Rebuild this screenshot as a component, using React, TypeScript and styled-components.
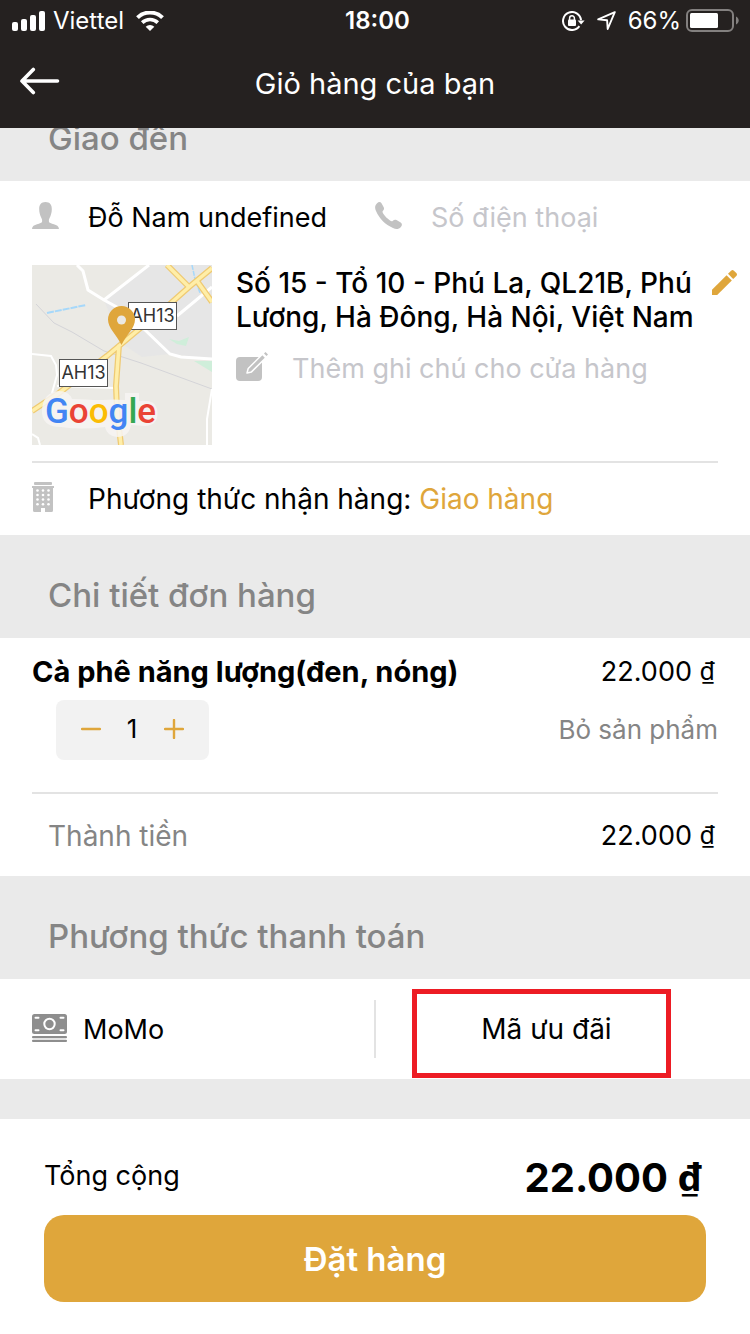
import React, { useState } from "react";
import styled, { createGlobalStyle } from "styled-components";

const color = {
  dark: "#252120",
  gold: "#dfa63b",
  band: "#eaeaea",
  rule: "#e3e3e3",
  muted: "#858585",
  icon: "#c2c2c2",
  placeholder: "#c6c6cb",
};

const GlobalStyle = createGlobalStyle`
  * { box-sizing: border-box; }
  body {
    margin: 0;
    background: #fff;
    color: #000;
    font-family: Inter, "Noto Sans", sans-serif;
    font-size: 27px;
    line-height: 34px;
  }
  button, input { font: inherit; color: inherit; }
  svg { display: block; flex: none; }
`;

const Page = styled.div`
  display: flex;
  flex-direction: column;
  min-height: 100vh;
`;

const Header = styled.header`
  background: ${color.dark};
  color: #fff;
`;

const StatusBar = styled.div`
  display: grid;
  grid-template-columns: 1fr auto 1fr;
  align-items: center;
  height: 40px;
  padding: 1px 11px 0 12px;
  font-size: 24px;
`;

const StatusGroup = styled.div<{ $end?: boolean; $gap: number }>`
  display: flex;
  align-items: center;
  justify-content: ${(p) => (p.$end ? "flex-end" : "flex-start")};
  gap: ${(p) => p.$gap}px;
`;

const Clock = styled.time`
  padding-left: 4px;
  font-weight: 600;
`;

const NavBar = styled.div`
  display: grid;
  grid-template-columns: 40px 1fr 40px;
  align-items: center;
  height: 88px;
  padding: 0 20px;
`;

const Title = styled.h1`
  margin: 0;
  font-size: 29px;
  font-weight: 400;
  text-align: center;
`;

const PlainButton = styled.button`
  display: flex;
  align-items: center;
  padding: 0;
  border: 0;
  background: none;
  cursor: pointer;
`;

const BackButton = styled(PlainButton)`
  height: 48px;
  margin-bottom: 6px;
`;

const Viewport = styled.main`
  flex: 1;
  overflow: hidden;
`;

const Scrolled = styled.div`
  margin-top: -50px;
`;

const SectionHeading = styled.h2`
  display: flex;
  align-items: flex-end;
  height: 103px;
  margin: 0;
  padding: 0 48px 23px;
  background: ${color.band};
  color: ${color.muted};
  font-size: 33px;
  font-weight: 500;
  line-height: 40px;
`;

const Section = styled.section`
  padding: 0 32px;
`;

const Contact = styled.div`
  display: grid;
  grid-template-columns: 1fr 1fr;
  height: 84px;
  padding-bottom: 12px;
`;

const Field = styled.label`
  display: grid;
  grid-template-columns: 56px 1fr;
  align-items: center;
  svg { margin-bottom: 3px; }
`;

const TextInput = styled.input`
  width: 100%;
  height: 34px;
  min-width: 0;
  padding: 2px 0 0;
  border: 0;
  outline: 0;
  background: none;
  &::placeholder { color: ${color.placeholder}; opacity: 1; }
`;

const Place = styled.div`
  display: grid;
  grid-template-columns: 180px 1fr;
  gap: 24px;
  padding-bottom: 16px;
  border-bottom: 2px solid ${color.rule};
`;

const PlaceDetails = styled.div`
  display: flex;
  flex-direction: column;
  gap: 17px;
  margin-right: -19px;
`;

const AddressRow = styled.div`
  display: flex;
  align-items: flex-start;
  justify-content: space-between;
`;

const Address = styled.p`
  flex: 1;
  margin: 0;
  padding-top: 1px;
  font-size: 28px;
  font-weight: 500;
`;

const EditButton = styled(PlainButton)`
  height: 34px;
`;

const DeliveryRow = styled.div`
  display: grid;
  grid-template-columns: 56px 1fr;
  align-items: center;
  height: 72px;
  font-size: 28px;
  svg { margin-bottom: 4px; }
`;

const LinkButton = styled.button<{ $tone: string; $size?: number }>`
  padding: 0;
  border: 0;
  background: none;
  color: ${(p) => p.$tone};
  font-size: ${(p) => p.$size ?? 28}px;
  cursor: pointer;
`;

const Item = styled.article`
  display: flex;
  flex-direction: column;
  gap: 11px;
  padding: 17px 0 32px;
  border-bottom: 2px solid ${color.rule};
`;

const SpreadRow = styled.div`
  display: flex;
  align-items: center;
  justify-content: space-between;
`;

const ItemName = styled.h3`
  margin: 0;
  font-size: 29px;
  font-weight: 700;
`;

const Stepper = styled.div`
  display: grid;
  grid-template-columns: 1fr 30px 1fr;
  align-items: center;
  justify-items: center;
  width: 153px;
  height: 60px;
  margin-left: 24px;
  padding: 0 9px 3px 8px;
  border-radius: 8px;
  background: #f2f2f2;
  font-size: 26px;
`;

const Subtotal = styled(SpreadRow)`
  height: 82px;
  padding: 1px 0 0 16px;
`;

const Muted = styled.span`
  color: ${color.muted};
  font-size: 28px;
`;

const Currency = styled.span`
  font-family: "Noto Sans", sans-serif;
  line-height: 1;
  vertical-align: 1px;
`;

const Amount = styled.span`
  padding-right: 3px;
  ${Currency} { font-size: 25px; }
`;

const TotalAmount = styled.strong`
  padding-right: 4px;
  font-size: 40px;
  font-weight: 700;
  ${Currency} { font-size: 38px; }
`;

const Payment = styled(Section)`
  display: grid;
  grid-template-columns: 1fr 1fr;
  align-items: center;
  height: 100px;
`;

const Method = styled(PlainButton)`
  gap: 16px;
  height: 58px;
  margin-right: -1px;
  border-right: 2px solid ${color.rule};
  svg { margin-bottom: 2px; }
`;

const MethodName = styled.span`
  padding-top: 2px;
`;

const Promo = styled.div`
  position: relative;
  display: flex;
  justify-content: center;
  align-items: center;
  height: 100px;
`;

const Highlight = styled.span`
  position: absolute;
  inset: 10px 47px 1px 37px;
  border: 5px solid #ed1c24;
  pointer-events: none;
`;

const Footer = styled.footer`
  padding: 32px 44px;
  border-top: 40px solid ${color.band};
`;

const Total = styled(SpreadRow)`
  height: 48px;
  margin-bottom: 16px;
  padding-top: 2px;
`;

const OrderButton = styled.button`
  width: 100%;
  height: 87px;
  border: 0;
  border-radius: 20px;
  background: ${color.gold};
  color: #fff;
  font-size: 33px;
  font-weight: 600;
  cursor: pointer;
`;

const Signal = () => (
  <svg width="33" height="20" viewBox="0 0 33 20" fill="#fff" aria-hidden="true">
    <rect x="0" y="11" width="6" height="9" rx="2" />
    <rect x="9" y="8" width="6" height="12" rx="2" />
    <rect x="18" y="4" width="6" height="16" rx="2" />
    <rect x="27" y="0" width="6" height="20" rx="2" />
  </svg>
);

const Wifi = () => (
  <svg width="28" height="20" viewBox="0 0 28 20" aria-hidden="true">
    <path d="M1.5 6.6a18 18 0 0 1 25 0" fill="none" stroke="#fff" strokeWidth="4" />
    <path d="M6.2 11.6a11.2 11.2 0 0 1 15.6 0" fill="none" stroke="#fff" strokeWidth="3.6" />
    <path d="M14 20l-4.3-4.3a6.2 6.2 0 0 1 8.6 0z" fill="#fff" />
  </svg>
);

const RotationLock = () => (
  <svg width="23" height="20" viewBox="0 0 23 20" aria-hidden="true">
    <path d="M17.4 15.2A9 9 0 1 1 19 9.2" fill="none" stroke="#fff" strokeWidth="2" />
    <path d="M15.6 9.4h7l-3.5 4z" fill="#fff" />
    <rect x="6" y="8.5" width="8" height="6.5" rx="1" fill="#fff" />
    <path d="M7.6 9V7.2a2.4 2.4 0 0 1 4.8 0V9" fill="none" stroke="#fff" strokeWidth="1.5" />
  </svg>
);

const LocationArrow = () => (
  <svg width="19" height="19" viewBox="0 0 19 19" aria-hidden="true">
    <path d="M17.8 1.2L1.200 8.400l8.900.8.600 8.800z" fill="none" stroke="#fff" strokeWidth="1.900" strokeLinejoin="round" />
  </svg>
);

const Battery = () => (
  <svg width="53" height="23" viewBox="0 0 53 23" aria-hidden="true">
    <rect x="1" y="1" width="46" height="21" rx="5" fill="none" stroke="#83807f" strokeWidth="2" />
    <rect x="4" y="4" width="28" height="15" rx="1.5" fill="#fff" />
    <path d="M50 7.500c3.600 1.600 3.600 6.400 0 8z" fill="#83807f" />
  </svg>
);

const ArrowLeft = () => (
  <svg width="40" height="28" viewBox="0 0 40 28" fill="none" stroke="#fff" strokeWidth="3.600" strokeLinecap="round" strokeLinejoin="round" aria-hidden="true">
    <path d="M13.300 2.500L2 14l11.300 11.500M2.500 14H37.500" />
  </svg>
);

const Person = () => (
  <svg width="27" height="27" viewBox="0 0 27 27" fill={color.icon} aria-hidden="true">
    <path d="M13.500 0c4.300 0 6.500 2.800 6.300 7.200 0 3-.8 5.400-1.500 7.200-.6 1.700-1.400 2.400-1.400 3.300v1.800c0 2.900 10.100 1.800 10.100 7.500H0c0-5.700 10.100-4.600 10.100-7.500v-1.800c0-.9-.8-1.600-1.400-3.300-.7-1.800-1.500-4.200-1.500-7.200C7 2.800 9.200 0 13.500 0z" />
  </svg>
);

const Phone = () => (
  <svg width="27" height="27" viewBox="0 0 27 27" fill={color.icon} aria-hidden="true">
    <path d="M2.100 1.200C3.600-.2 5.400-.3 6.500 1.200l2.200 4c.7 1.300.3 2.600-.7 3.600-.9.900-.5 1.800.5 3.200 1.700 2.500 3.700 4.500 6.200 6.200 1.400 1 2.300 1.400 3.200.5 1-1 2.300-1.400 3.600-.7l4.200 2.600c1.600 1.200 1.600 2.800.2 4.300-2.100 2.400-4.800 2.600-7.900 1.200C10.100 22.500 4.700 17.100 1 9.100-.4 6-.2 3.300 2.100 1.200z" />
  </svg>
);

const Compose = () => (
  <svg width="32" height="30" viewBox="0 0 32 30" aria-hidden="true">
    <rect x="0" y="5" width="26" height="24" rx="4" fill={color.icon} />
    <path d="M11 21l1.200-4.500L26.400 2.300l3.400 3.400-14.300 14.200z" fill={color.icon} stroke="#fff" strokeWidth="1.500" strokeLinejoin="round" />
    <path d="M28 1.500L29.500 0 32 2.500 30.500 4z" fill={color.icon} />
  </svg>
);

const Pencil = () => (
  <svg width="25" height="25" viewBox="0 0 25 25" fill={color.gold} aria-hidden="true">
    <path d="M0 19.700L14.600 5.200l5.200 5.200L5.200 25H0z" />
    <path d="M16 3.800L19.100.7a2 2 0 0 1 2.800 0l2.400 2.400a2 2 0 0 1 0 2.800L21.200 9z" />
  </svg>
);

const Building = () => (
  <svg width="22" height="30" viewBox="0 0 22 30" fill={color.icon} aria-hidden="true">
    <rect x="2" y="0" width="18" height="3" rx="1" />
    <path d="M0 4h22v2h-1v22.500q0 1.500-1.500 1.500H13v-4H9v4H2.500Q1 30 1 28.500V6H0z" />
    {[8.5, 13, 17.5, 22.2].map((y) =>
      [5.5, 11, 16.5].map((x) => <circle key={`${x}-${y}`} cx={x} cy={y} r="1.300" fill="#fff" />)
    )}
  </svg>
);

const Cash = () => (
  <svg width="35" height="28" viewBox="0 0 35 28" aria-hidden="true">
    <g fill="#8e8e8e">
      <rect width="35" height="20" rx="2.500" />
      <rect y="22" width="35" height="2.200" rx="1" />
      <rect y="25.800" width="35" height="2.200" rx="1" />
    </g>
    <circle cx="17.500" cy="10" r="5.200" fill="none" stroke="#fff" strokeWidth="2" />
    <path d="M3.500 3.800h3M28.500 3.800h3M3.500 16.200h3M28.500 16.200h3" stroke="#fff" strokeWidth="2" strokeLinecap="round" />
  </svg>
);

const Minus = () => (
  <svg width="20" height="20" viewBox="0 0 20 20" stroke={color.gold} strokeWidth="2.400" strokeLinecap="round" aria-hidden="true">
    <path d="M1 10h18" />
  </svg>
);

const Plus = () => (
  <svg width="20" height="20" viewBox="0 0 20 20" stroke={color.gold} strokeWidth="2.400" strokeLinecap="round" aria-hidden="true">
    <path d="M1 10h18M10 1v18" />
  </svg>
);

const mainRoads = "M0 146L27 128 75 91 112 60 139 38 157 22 180 3M135 0L157 22M165 16L180 37M87 80L84 121 85 145 89 180";

const RoadSign = ({ x, y }: { x: number; y: number }) => (
  <g>
    <rect x={x + 0.5} y={y + 0.5} width="48" height="27" fill="#fff" stroke="#555" />
    <text x={x + 24.5} y={y + 20} textAnchor="middle" fontSize="18" fill="#333">AH13</text>
  </g>
);

const MapPreview = () => (
  <svg width="180" height="180" viewBox="0 0 180 180" fill="none" role="img" aria-label="Google">
    <rect width="180" height="180" fill="#ebeae5" />
    <path d="M117 0L72 35 89 78 110 92 138 89 180 94V0z" fill="#e6e6e6" />
    <path d="M137 74l10 2 10-4-3 9-9-2zM162 96h18v11z" fill="#cfeeda" />
    <path d="M4 39L22 58 40 67 72 86 109 98 180 124" stroke="#d4d4d8" />
    <path d="M15 48L54 40" stroke="#a6d8fa" strokeWidth="2" strokeDasharray="7 1" />
    <path d="M160 0l3 14 5 14" stroke="#a6d8fa" strokeWidth="1.500" strokeDasharray="5 1" />
    <g stroke="#fff" strokeWidth="3">
      <path d="M45 0L51 6 56 25 72 35 92 46 112 64 138 89 149 92 180 94M72 35L117 0M180 22L145 51" />
      <path strokeWidth="2" d="M0 89l19 2 5 9 1 10-5 18M25 121l57 2M180 124l-5 30v26M0 169l6 4 2 7" />
    </g>
    <path d={mainRoads} stroke="#efca72" strokeWidth="6" />
    <path d={mainRoads} stroke="#ffeea8" strokeWidth="3.500" />
    <RoadSign x={96} y={37} />
    <RoadSign x={27} y={94} />
    <path d="M89.500 80C84 69 76 63 76 54.500a13.500 13.500 0 0 1 27 0C103 63 95 69 89.500 80z" fill={color.gold} />
    <circle cx="89.500" cy="55" r="4.500" fill="#ebe9e4" />
    <path
      d="M27 126q10 0 13 8 8 0 21 1h10q10-1 22 0V128h14v8q16-2 18 8 3 16-12 17l-14-1q-2 12-14 12-10-1-12-10-24 3-44 0-20 0-19-17 1-18 17-19z"
      fill="#f7f5f3"
      fillOpacity="0.850"
    />
    <text x="13" y="158" fontFamily="Roboto, sans-serif" fontSize="35" fontWeight="500">
      <tspan fill="#4285f4">G</tspan>
      <tspan fill="#ea4335">o</tspan>
      <tspan fill="#fbbc05">o</tspan>
      <tspan fill="#4285f4">g</tspan>
      <tspan fill="#34a853">l</tspan>
      <tspan fill="#ea4335">e</tspan>
    </text>
  </svg>
);

const Price = ({ value }: { value: number }) => (
  <>
    {value}.000 <Currency>₫</Currency>
  </>
);

export default function App() {
  const [name, setName] = useState("Đỗ Nam undefined");
  const [phone, setPhone] = useState("");
  const [note, setNote] = useState("");
  const [quantity, setQuantity] = useState(1);
  const sum = 22 * quantity;

  return (
    <>
      <GlobalStyle />
      <Page>
        <Header>
          <StatusBar>
            <StatusGroup $gap={12}>
              <StatusGroup $gap={8}>
                <Signal />
                <span>Viettel</span>
              </StatusGroup>
              <Wifi />
            </StatusGroup>
            <Clock>18:00</Clock>
            <StatusGroup $end $gap={12}>
              <RotationLock />
              <LocationArrow />
              <StatusGroup $gap={5}>
                <span>66%</span>
                <Battery />
              </StatusGroup>
            </StatusGroup>
          </StatusBar>
          <NavBar>
            <BackButton type="button" aria-label="Quay lại">
              <ArrowLeft />
            </BackButton>
            <Title>Giỏ hàng của bạn</Title>
          </NavBar>
        </Header>

        <Viewport>
          <Scrolled>
            <SectionHeading>Giao đến</SectionHeading>
            <Section>
              <Contact>
                <Field>
                  <Person />
                  <TextInput aria-label="Họ tên" value={name} onChange={(e) => setName(e.target.value)} />
                </Field>
                <Field>
                  <Phone />
                  <TextInput type="tel" aria-label="Số điện thoại" placeholder="Số điện thoại" value={phone} onChange={(e) => setPhone(e.target.value)} />
                </Field>
              </Contact>
              <Place>
                <MapPreview />
                <PlaceDetails>
                  <AddressRow>
                    <Address>Số 15 - Tổ 10 - Phú La, QL21B, Phú Lương, Hà Đông, Hà Nội, Việt Nam</Address>
                    <EditButton type="button" aria-label="Sửa địa chỉ">
                      <Pencil />
                    </EditButton>
                  </AddressRow>
                  <Field>
                    <Compose />
                    <TextInput aria-label="Ghi chú" placeholder="Thêm ghi chú cho cửa hàng" value={note} onChange={(e) => setNote(e.target.value)} />
                  </Field>
                </PlaceDetails>
              </Place>
              <DeliveryRow>
                <Building />
                <span>
                  Phương thức nhận hàng: <LinkButton type="button" $tone={color.gold}>Giao hàng</LinkButton>
                </span>
              </DeliveryRow>
            </Section>

            <SectionHeading>Chi tiết đơn hàng</SectionHeading>
            <Section>
              <Item>
                <SpreadRow>
                  <ItemName>Cà phê năng lượng(đen, nóng)</ItemName>
                  <Amount><Price value={sum} /></Amount>
                </SpreadRow>
                <SpreadRow>
                  <Stepper>
                    <PlainButton type="button" aria-label="Giảm" onClick={() => setQuantity(Math.max(1, quantity - 1))}>
                      <Minus />
                    </PlainButton>
                    <span>{quantity}</span>
                    <PlainButton type="button" aria-label="Tăng" onClick={() => setQuantity(quantity + 1)}>
                      <Plus />
                    </PlainButton>
                  </Stepper>
                  <LinkButton type="button" $tone={color.muted} $size={26}>Bỏ sản phẩm</LinkButton>
                </SpreadRow>
              </Item>
              <Subtotal>
                <Muted>Thành tiền</Muted>
                <Amount><Price value={sum} /></Amount>
              </Subtotal>
            </Section>

            <SectionHeading>Phương thức thanh toán</SectionHeading>
            <Payment>
              <Method type="button">
                <Cash />
                <MethodName>MoMo</MethodName>
              </Method>
              <Promo>
                <LinkButton type="button" $tone="#000">Mã ưu đãi</LinkButton>
                <Highlight />
              </Promo>
            </Payment>
          </Scrolled>
        </Viewport>

        <Footer>
          <Total>
            <span>Tổng cộng</span>
            <TotalAmount><Price value={sum} /></TotalAmount>
          </Total>
          <OrderButton type="button">Đặt hàng</OrderButton>
        </Footer>
      </Page>
    </>
  );
}
